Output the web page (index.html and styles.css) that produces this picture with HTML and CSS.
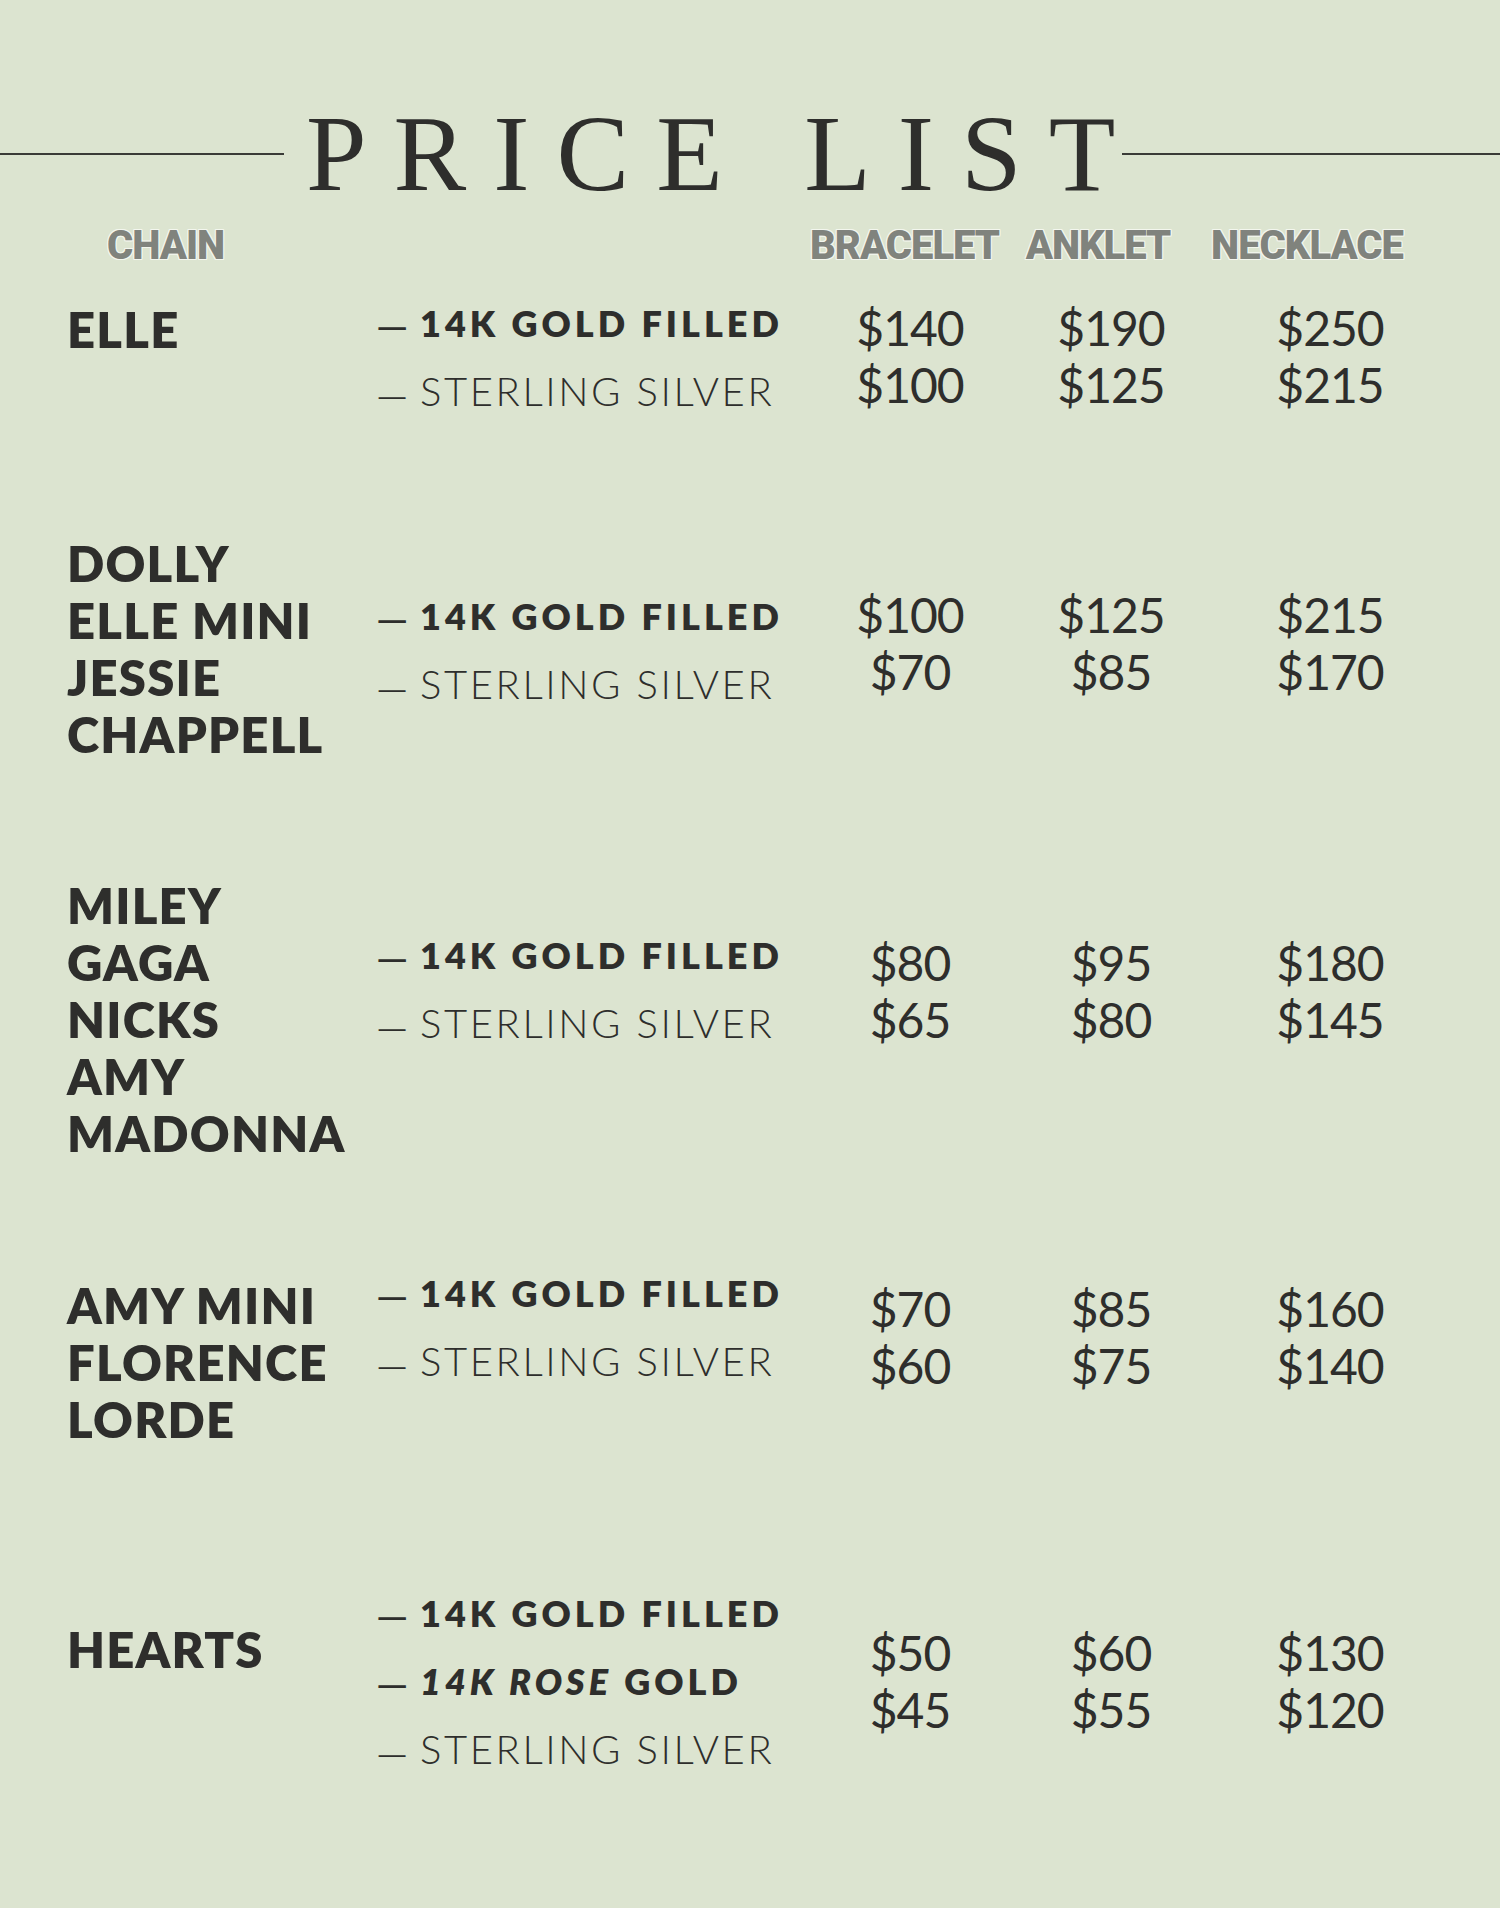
FILE: index.html
```html
<!DOCTYPE html>
<html lang="en">
<head>
<meta charset="utf-8">
<title>Price List</title>
<link rel="stylesheet" href="styles.css">
</head>
<body>
<main class="page">
  <header class="title-row">
    <span class="rule rule-left"></span>
    <h1 class="title">PRICE LIST</h1>
    <span class="rule rule-right"></span>
  </header>

  <div class="head-row">
    <div class="head head-chain">CHAIN</div>
    <div class="head">BRACELET</div>
    <div class="head">ANKLET</div>
    <div class="head">NECKLACE</div>
  </div>

  <section class="group g1">
    <div class="names"><div>ELLE</div></div>
    <div class="materials">
      <div class="mat gold"><span class="dash">—</span>14K GOLD FILLED</div>
      <div class="mat silver"><span class="dash">—</span>STERLING SILVER</div>
    </div>
    <div class="prices"><div>$140</div><div>$100</div></div>
    <div class="prices"><div>$190</div><div>$125</div></div>
    <div class="prices"><div>$250</div><div>$215</div></div>
  </section>

  <section class="group g2">
    <div class="names"><div>DOLLY</div><div>ELLE MINI</div><div>JESSIE</div><div>CHAPPELL</div></div>
    <div class="materials">
      <div class="mat gold"><span class="dash">—</span>14K GOLD FILLED</div>
      <div class="mat silver"><span class="dash">—</span>STERLING SILVER</div>
    </div>
    <div class="prices"><div>$100</div><div>$70</div></div>
    <div class="prices"><div>$125</div><div>$85</div></div>
    <div class="prices"><div>$215</div><div>$170</div></div>
  </section>

  <section class="group g3">
    <div class="names"><div>MILEY</div><div>GAGA</div><div>NICKS</div><div>AMY</div><div>MADONNA</div></div>
    <div class="materials">
      <div class="mat gold"><span class="dash">—</span>14K GOLD FILLED</div>
      <div class="mat silver"><span class="dash">—</span>STERLING SILVER</div>
    </div>
    <div class="prices"><div>$80</div><div>$65</div></div>
    <div class="prices"><div>$95</div><div>$80</div></div>
    <div class="prices"><div>$180</div><div>$145</div></div>
  </section>

  <section class="group g4">
    <div class="names"><div>AMY MINI</div><div>FLORENCE</div><div>LORDE</div></div>
    <div class="materials">
      <div class="mat gold"><span class="dash">—</span>14K GOLD FILLED</div>
      <div class="mat silver"><span class="dash">—</span>STERLING SILVER</div>
    </div>
    <div class="prices"><div>$70</div><div>$60</div></div>
    <div class="prices"><div>$85</div><div>$75</div></div>
    <div class="prices"><div>$160</div><div>$140</div></div>
  </section>

  <section class="group g5">
    <div class="names"><div>HEARTS</div></div>
    <div class="materials">
      <div class="mat gold"><span class="dash">—</span>14K GOLD FILLED</div>
      <div class="mat gold"><span class="dash">—</span><em>14K ROSE</em> GOLD</div>
      <div class="mat silver"><span class="dash">—</span>STERLING SILVER</div>
    </div>
    <div class="prices"><div>$50</div><div>$45</div></div>
    <div class="prices"><div>$60</div><div>$55</div></div>
    <div class="prices"><div>$130</div><div>$120</div></div>
  </section>
</main>
</body>
</html>
```

FILE: styles.css
```css
html, body {
  margin: 0;
  padding: 0;
}

body {
  background: #dce4d0;
  color: #2e2e2c;
  font-family: "Lato", "Liberation Sans", sans-serif;
  min-height: 1908px;
}

.page {
  width: 1500px;
  padding-top: 99px;
}

/* ---------- title ---------- */
.title-row {
  display: flex;
  align-items: center;
  height: 109px;
}

.rule {
  height: 2px;
  background: #3a3b37;
}

.rule-left {
  width: 284px;
}

.rule-right {
  flex: 1;
  margin-left: -20px;
}

.title {
  margin: 0 0 0 22px;
  font-family: "Liberation Serif", "Times New Roman", serif;
  font-weight: 400;
  font-size: 109px;
  line-height: 109px;
  letter-spacing: 27px;
  color: #2e2e2c;
  white-space: nowrap;
}

/* ---------- column heads ---------- */
.head-row {
  display: grid;
  grid-template-columns: 743px 182px 212px 206px;
  padding-left: 67px;
  margin-top: 14px;
}

.head {
  font-family: "Roboto", "Liberation Sans", sans-serif;
  font-weight: 900;
  font-size: 40px;
  line-height: 48px;
  letter-spacing: -1px;
  text-align: center;
  color: #80837d;
  text-shadow:
    1px 0 0 #f3f6ee, -1px 0 0 #f3f6ee, 0 1px 0 #f3f6ee, 0 -1px 0 #f3f6ee,
    1px 1px 0 #f3f6ee, -1px -1px 0 #f3f6ee, 1px -1px 0 #f3f6ee, -1px 1px 0 #f3f6ee;
}

.head-chain {
  text-align: left;
  padding-left: 40px;
}

/* ---------- groups ---------- */
.group {
  display: grid;
  grid-template-columns: 309px 434px 200px 202px 236px;
  padding-left: 67px;
  align-items: start;
}

.names {
  font-weight: 800;
  font-size: 49px;
  line-height: 57px;
  letter-spacing: 1.2px;
  white-space: nowrap;
  padding-top: var(--name-pad, 0px);
}

.materials {
  padding-top: var(--mat-pad, 0px);
  white-space: nowrap;
}

.mat {
  line-height: 68px;
  height: 68px;
}

.gold {
  font-weight: 800;
  font-size: 36px;
  letter-spacing: 4px;
}

.gold em {
  font-style: italic;
}

.silver {
  font-weight: 300;
  font-size: 40px;
  letter-spacing: 2.6px;
}

.dash {
  display: inline-block;
  width: 44px;
  font-size: 27px;
  line-height: 1;
  letter-spacing: 0;
  vertical-align: baseline;
}

.gold .dash {
  font-weight: 700;
  transform: scale(1.5, 1.1);
  transform-origin: 0 70%;
}

.silver .dash {
  font-weight: 400;
  transform: scale(1.5, 1);
  transform-origin: 0 70%;
}

.prices {
  padding-top: var(--price-pad, 0px);
  font-weight: 400;
  font-size: 48px;
  line-height: 57px;
  letter-spacing: -1px;
  text-align: center;
}

.g1 { margin-top: 19px; --name-pad: 12px; --mat-pad: 0px; --price-pad: 10px; }
.g2 { margin-top: 110px; --name-pad: 0px; --mat-pad: 47px; --price-pad: 51px; }
.g3 { margin-top: 114px; --name-pad: 0px; --mat-pad: 44px; --price-pad: 57px; }
.g4 { margin-top: 97px; --name-pad: 18px; --mat-pad: 0px; --price-pad: 21px; }
.g5 { margin-top: 131px; --name-pad: 42px; --mat-pad: 0px; --price-pad: 45px; }
```
